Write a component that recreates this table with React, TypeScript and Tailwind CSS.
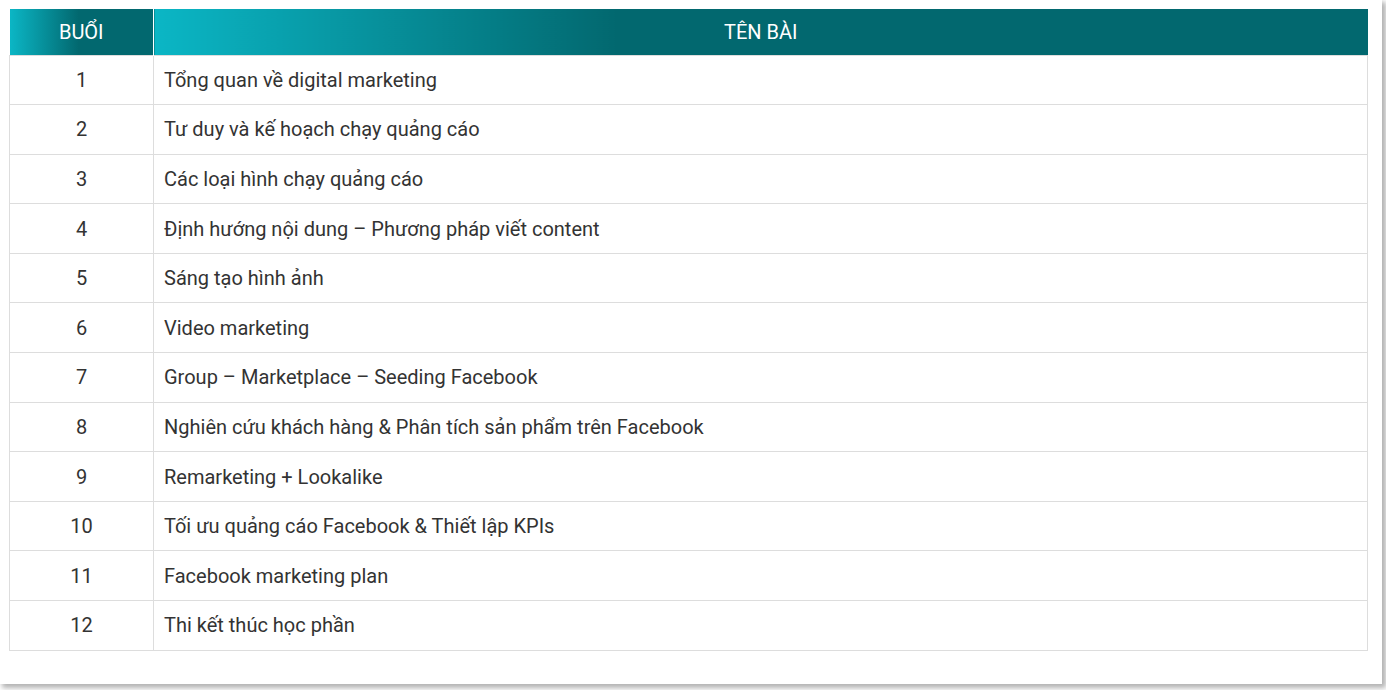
const lessons = [
  "Tổng quan về digital marketing",
  "Tư duy và kế hoạch chạy quảng cáo",
  "Các loại hình chạy quảng cáo",
  "Định hướng nội dung – Phương pháp viết content",
  "Sáng tạo hình ảnh",
  "Video marketing",
  "Group – Marketplace – Seeding Facebook",
  "Nghiên cứu khách hàng & Phân tích sản phẩm trên Facebook",
  "Remarketing + Lookalike",
  "Tối ưu quảng cáo Facebook & Thiết lập KPIs",
  "Facebook marketing plan",
  "Thi kết thúc học phần",
];

function App() {
  return (
    <div className="h-[690px] w-[1386px] bg-white font-['Roboto',sans-serif]">
      <div className="h-[684px] w-[1382px] bg-white pl-[9px] pt-[9px] shadow-[3px_3px_5px_1px_rgba(0,0,0,0.3)]">
        <table className="w-[1359px] border-collapse text-[20px] text-[#333]">
          <thead>
            <tr className="h-[46px] text-[20px] uppercase text-white">
              <th className="w-[144px] border-r border-white bg-[linear-gradient(90deg,#0bb6c5_0%,#02686f_48%)] font-normal">
                Buổi
              </th>
              <th className="bg-[linear-gradient(90deg,#0bb6c5_0%,#02686f_38%)] font-normal">
                Tên bài
              </th>
            </tr>
          </thead>
          <tbody>
            {lessons.map((name, i) => (
              <tr key={i} className="h-[49.6px]">
                <td className="border border-[#dddddd] text-center">{i + 1}</td>
                <td className="border border-[#dddddd] px-[10px]">{name}</td>
              </tr>
            ))}
          </tbody>
        </table>
      </div>
    </div>
  );
}

export default App;
